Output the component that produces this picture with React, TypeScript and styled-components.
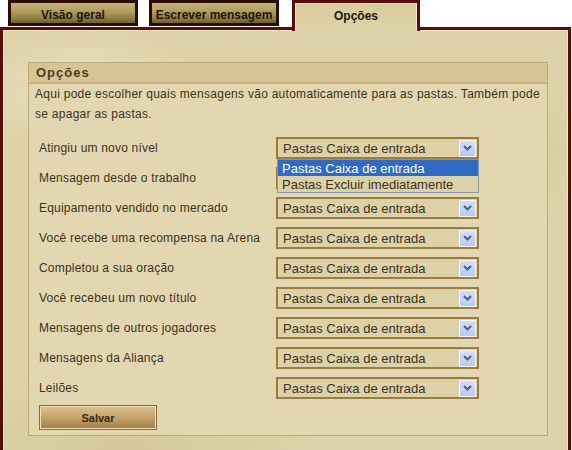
import React from "react";
import styled, {createGlobalStyle} from "styled-components";

const GlobalStyle = createGlobalStyle`
  body {
    margin: 0;
    background: #ffffff;
    font-family: "Liberation Sans", Arial, sans-serif;
  }
`;

const Page = styled.div`
  width: 571px;
  height: 450px;
  overflow: hidden;
`;

const TabBar = styled.div`
  display: flex;
  align-items: flex-start;
  gap: 11px;
  padding-left: 8px;
  height: 27px;
  position: relative;
  z-index: 2;
`;

const Tab = styled.div<{ $active?: boolean; $width: number }>`
  width: ${p => p.$width}px;
  box-sizing: border-box;
  display: flex;
  align-items: center;
  justify-content: center;
  font-size: 12px;
  font-weight: bold;
  color: #241406;
  ${p => p.$active ? `
    height: 31px;
    margin-left: 2px;
    border: 3px solid #5a0d08;
    border-bottom: none;
    box-shadow: inset 1px 1px 0 #f3ead0, inset -1px 0 0 #f3ead0;
    background: linear-gradient(180deg, #d8cc9c 0%, #ddd2a8 100%);
    padding-bottom: 3px;
  ` : `
    height: 26px;
    border: 3px solid #2c0d06;
    background: linear-gradient(180deg, #c4b476 0%, #ad9c5c 45%, #8c7a40 80%, #6e5e2c 100%);
    padding-top: 4px;
  `}
`;

const Panel = styled.div`
  position: relative;
  z-index: 1;
  height: 440px;
  box-sizing: border-box;
  border: 3px solid #5a0d08;
  box-shadow: inset 0 0 0 1px #f1e7c6;
  background:
    radial-gradient(ellipse 120px 60px at 80px 60px, rgba(255,250,230,0.35), transparent),
    radial-gradient(ellipse 160px 80px at 470px 120px, rgba(190,170,120,0.18), transparent),
    radial-gradient(ellipse 140px 90px at 300px 300px, rgba(255,250,230,0.25), transparent),
    radial-gradient(ellipse 200px 80px at 120px 420px, rgba(180,160,110,0.2), transparent),
    #ddd2a9;
  padding: 32px 20px 0 25px;
`;

const Box = styled.div`
  width: 520px;
  box-sizing: border-box;
  border: 1px solid #bea878;
  background: #e2d7b0;
  padding-bottom: 5px;
`;

const BoxHeader = styled.div`
  height: 21px;
  box-sizing: border-box;
  background: #d8c595;
  border-bottom: 2px solid #c7b07e;
  padding-left: 7px;
  display: flex;
  align-items: center;
  font-size: 13px;
  font-weight: bold;
  letter-spacing: 1px;
  color: #4b3b1e;
`;

const Description = styled.p`
  margin: 0;
  padding: 0 5px 0 6px;
  font-size: 12px;
  line-height: 20px;
  color: #3a3222;
  letter-spacing: 0.27px;
`;

const Rows = styled.div`
  display: flex;
  flex-direction: column;
  padding: 9px 0 0 10px;
`;

const Row = styled.div`
  display: flex;
  align-items: center;
  height: 30px;
`;

const Label = styled.span`
  width: 237px;
  white-space: nowrap;
  font-size: 12px;
  letter-spacing: 0.2px;
  color: #3a3222;
`;

const SelectWrap = styled.div`
  position: relative;
`;

const Select = styled.div`
  width: 203px;
  height: 22px;
  box-sizing: border-box;
  border: 2px solid #9b7b3e;
  background: #ddd1a8;
  display: flex;
  align-items: center;
  justify-content: space-between;
  padding: 0 1px 0 5px;
  font-size: 13px;
  color: #3a3222;
`;

const ArrowButton = styled.span`
  width: 17px;
  height: 17px;
  box-sizing: border-box;
  border: 1px solid #f2f5fc;
  background: linear-gradient(180deg, #d3def9 0%, #b9cbf4 100%);
  display: flex;
  align-items: center;
  justify-content: center;
`;

const Menu = styled.div`
  position: absolute;
  left: 1px;
  top: 22px;
  width: 202px;
  box-sizing: border-box;
  border: 1px solid #8696aa;
  background: #ddd1a8;
  z-index: 3;
`;

const MenuItem = styled.div<{ $selected?: boolean }>`
  height: 16px;
  line-height: 17px;
  padding-left: 4px;
  font-size: 13px;
  color: ${p => p.$selected ? "#ffffff" : "#3a3222"};
  background: ${p => p.$selected ? "#316ac5" : "transparent"};
`;

const SaveButton = styled.button`
  margin: 2px 0 0 10px;
  width: 118px;
  height: 25px;
  border: 1px solid #8c6c3a;
  box-shadow: inset 0 0 0 1px #eedfb4;
  background: linear-gradient(180deg, #dcc48f 0%, #c6a66c 45%, #a07e46 100%);
  font-family: "Liberation Sans", Arial, sans-serif;
  font-size: 11px;
  font-weight: bold;
  color: #3a2a10;
  padding: 0;
`;

const Chevron = () => (
    <svg width="9" height="6" viewBox="0 0 9 6">
        <path d="M1 1 L4.5 4.5 L8 1" fill="none" stroke="#4d5f86" strokeWidth="2"/>
    </svg>
);

const rows = [
    "Atingiu um novo nível",
    "Mensagem desde o trabalho",
    "Equipamento vendido no mercado",
    "Você recebe uma recompensa na Arena",
    "Completou a sua oração",
    "Você recebeu um novo título",
    "Mensagens de outros jogadores",
    "Mensagens da Aliança",
    "Leilões",
];

export default function App() {
    return (
        <Page>
            <GlobalStyle/>
            <TabBar>
                <Tab $width={130}>Visão geral</Tab>
                <Tab $width={130}>Escrever mensagem</Tab>
                <Tab $width={128} $active>Opções</Tab>
            </TabBar>
            <Panel>
                <Box>
                    <BoxHeader>Opções</BoxHeader>
                    <Description>
                        Aqui pode escolher quais mensagens vão automaticamente para as pastas. Também pode se apagar as pastas.
                    </Description>
                    <Rows>
                        {rows.map((label, i) => (
                            <Row key={label}>
                                <Label>{label}</Label>
                                <SelectWrap>
                                    <Select>
                                        <span>Pastas Caixa de entrada</span>
                                        <ArrowButton><Chevron/></ArrowButton>
                                    </Select>
                                    {i === 0 && (
                                        <Menu>
                                            <MenuItem $selected>Pastas Caixa de entrada</MenuItem>
                                            <MenuItem>Pastas Excluir imediatamente</MenuItem>
                                        </Menu>
                                    )}
                                </SelectWrap>
                            </Row>
                        ))}
                    </Rows>
                    <SaveButton>Salvar</SaveButton>
                </Box>
            </Panel>
        </Page>
    );
}
